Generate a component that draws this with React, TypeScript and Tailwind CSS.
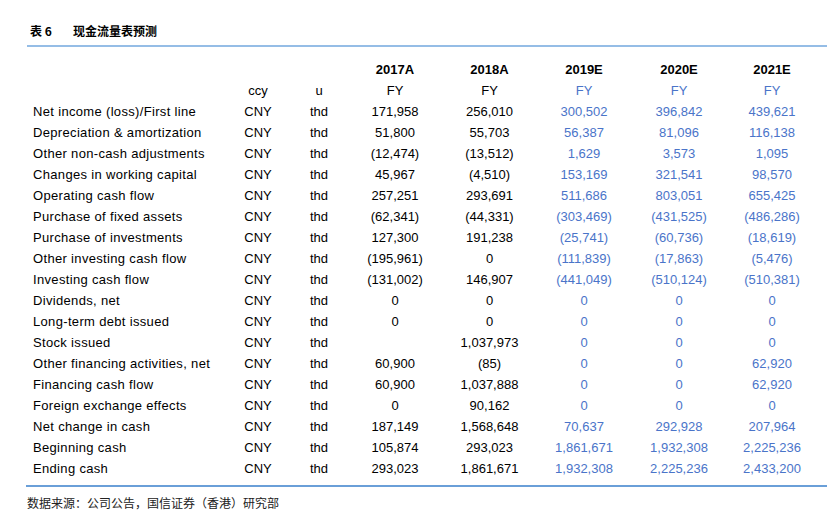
const years = ["2017A", "2018A", "2019E", "2020E", "2021E"];

// last three columns are forecasts and print in blue
const rows: [string, string[]][] = [
  ["Net income (loss)/First line", ["171,958", "256,010", "300,502", "396,842", "439,621"]],
  ["Depreciation & amortization", ["51,800", "55,703", "56,387", "81,096", "116,138"]],
  ["Other non-cash adjustments", ["(12,474)", "(13,512)", "1,629", "3,573", "1,095"]],
  ["Changes in working capital", ["45,967", "(4,510)", "153,169", "321,541", "98,570"]],
  ["Operating cash flow", ["257,251", "293,691", "511,686", "803,051", "655,425"]],
  ["Purchase of fixed assets", ["(62,341)", "(44,331)", "(303,469)", "(431,525)", "(486,286)"]],
  ["Purchase of investments", ["127,300", "191,238", "(25,741)", "(60,736)", "(18,619)"]],
  ["Other investing cash flow", ["(195,961)", "0", "(111,839)", "(17,863)", "(5,476)"]],
  ["Investing cash flow", ["(131,002)", "146,907", "(441,049)", "(510,124)", "(510,381)"]],
  ["Dividends, net", ["0", "0", "0", "0", "0"]],
  ["Long-term debt issued", ["0", "0", "0", "0", "0"]],
  ["Stock issued", ["", "1,037,973", "0", "0", "0"]],
  ["Other financing activities, net", ["60,900", "(85)", "0", "0", "62,920"]],
  ["Financing cash flow", ["60,900", "1,037,888", "0", "0", "62,920"]],
  ["Foreign exchange effects", ["0", "90,162", "0", "0", "0"]],
  ["Net change in cash", ["187,149", "1,568,648", "70,637", "292,928", "207,964"]],
  ["Beginning cash", ["105,874", "293,023", "1,861,671", "1,932,308", "2,225,236"]],
  ["Ending cash", ["293,023", "1,861,671", "1,932,308", "2,225,236", "2,433,200"]],
];

const grid =
  "grid grid-cols-[192px_66px_56px_96px_93px_96px_94px_92px] h-[21px] items-center";

const cellColor = (i: number) => (i >= 2 ? "text-[#4a74c9]" : "text-black");

export default function App() {
  return (
    <div className="w-[835px] h-[517px] bg-white relative font-['Liberation_Sans',sans-serif] text-[13px] text-black">
      <div className="pt-[21px] pl-[30px] flex items-center h-[41px] font-['Noto_Sans_CJK_SC',sans-serif] font-bold text-[12px]">
        <span className="w-[43px]">表 6</span>
        <span>现金流量表预测</span>
      </div>
      <div className="ml-[27px] mr-[8px] mt-[4px] h-[2px] bg-[#95bde6]" />

      <div className="ml-[33px] mt-[12px]">
        <div className={grid + " font-bold"}>
          <div />
          <div />
          <div />
          {years.map((y) => (
            <div key={y} className="text-center">
              {y}
            </div>
          ))}
        </div>
        <div className={grid}>
          <div />
          <div className="text-center">ccy</div>
          <div className="text-center">u</div>
          {years.map((y, i) => (
            <div key={y} className={"text-center " + cellColor(i)}>
              FY
            </div>
          ))}
        </div>
        {rows.map(([label, vals]) => (
          <div key={label} className={grid}>
            <div className="whitespace-nowrap tracking-[0.33px]">{label}</div>
            <div className="text-center">CNY</div>
            <div className="text-center">thd</div>
            {vals.map((v, i) => (
              <div key={i} className={"text-center " + cellColor(i)}>
                {v}
              </div>
            ))}
          </div>
        ))}
      </div>

      <div className="ml-[26px] mr-[8px] mt-[6px] h-[2px] bg-[#6a9fd8]" />
      <div className="pl-[27px] mt-[7px] font-['Noto_Sans_CJK_SC',sans-serif] text-[12px] text-[#222]">
        数据来源：公司公告，国信证券（香港）研究部
      </div>
    </div>
  );
}
